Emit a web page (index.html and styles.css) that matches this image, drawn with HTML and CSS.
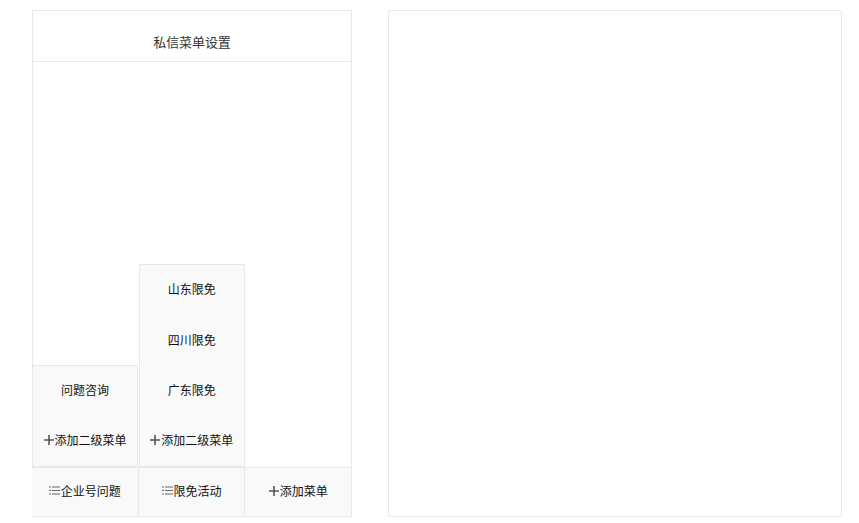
FILE: index.html
```html
<!DOCTYPE html>
<html lang="zh-CN">
<head>
  <meta charset="UTF-8">
  <title>私信菜单设置</title>
  <link rel="stylesheet" href="styles.css">
</head>
<body>
  <div class="phone">
    <div class="phone-title">私信菜单设置</div>
    <div class="menu-bar">
      <div class="menu-col">
        <div class="sub-menu">
          <div class="sub-item">问题咨询</div>
          <div class="sub-item"><svg class="icon-plus" viewBox="0 0 10 10"><path d="M0 5h10M5 0v10"/></svg>添加二级菜单</div>
        </div>
        <div class="menu-item"><svg class="icon-list" viewBox="0 0 11 9"><path d="M0 1h2M3 1h8M0 4.5h2M3 4.5h8M0 8h2M3 8h8"/></svg>企业号问题</div>
      </div>
      <div class="menu-col">
        <div class="sub-menu">
          <div class="sub-item">山东限免</div>
          <div class="sub-item">四川限免</div>
          <div class="sub-item">广东限免</div>
          <div class="sub-item"><svg class="icon-plus" viewBox="0 0 10 10"><path d="M0 5h10M5 0v10"/></svg>添加二级菜单</div>
        </div>
        <div class="menu-item"><svg class="icon-list" viewBox="0 0 11 9"><path d="M0 1h2M3 1h8M0 4.5h2M3 4.5h8M0 8h2M3 8h8"/></svg>限免活动</div>
      </div>
      <div class="menu-col">
        <div class="menu-item"><svg class="icon-plus" viewBox="0 0 10 10"><path d="M0 5h10M5 0v10"/></svg>添加菜单</div>
      </div>
    </div>
  </div>
  <div class="editor"></div>
</body>
</html>
```

FILE: styles.css
```css
body {
  margin: 0;
  padding: 10px 17px 6px 32px;
  height: 523px;
  box-sizing: border-box;
  display: flex;
  gap: 36px;
  background: #fff;
  color: #333;
  font-family: "Noto Sans CJK SC", "Liberation Sans", sans-serif;
  font-size: 12px;
  overflow: hidden;
}

.phone {
  width: 320px;
  box-sizing: border-box;
  border: 1px solid #e7e7e7;
  border-bottom: none;
  border-radius: 2px;
  display: flex;
  flex-direction: column;
}

.phone-title {
  height: 51px;
  box-sizing: border-box;
  padding-top: 22px;
  line-height: 18px;
  text-align: center;
  font-size: 13px;
  letter-spacing: -0.1px;
  border-bottom: 1px solid #e7e7e7;
}

.menu-bar {
  flex: 1;
  display: flex;
  align-items: flex-end;
  margin: 0 -1px;
}

.menu-col {
  flex: 1;
  display: flex;
  flex-direction: column;
  min-width: 0;
}

.sub-menu {
  margin-right: 0.5px;
  background: #f9f9f9;
  border: 1px solid #e7e7e7;
  border-radius: 2px 2px 0 0;
}

.sub-item {
  height: 50.2px;
  box-sizing: border-box;
  padding-bottom: 3px;
  display: flex;
  align-items: center;
  justify-content: center;
  color: #111;
}

.menu-item {
  height: 50px;
  box-sizing: border-box;
  padding-bottom: 3px;
  display: flex;
  align-items: center;
  justify-content: center;
  background: #f9f9f9;
  border: 1px solid #e7e7e7;
  border-left: none;
  border-top-color: #eaeaea;
  color: #111;
}

.icon-plus {
  width: 10px;
  height: 10px;
  margin: 1px 1px 0 0;
  fill: none;
  stroke: #555;
  stroke-width: 1.6;
}

.icon-list {
  width: 11px;
  height: 9px;
  margin-right: 1px;
  fill: none;
  stroke: #666;
  stroke-width: 1;
}

.editor {
  flex: 1;
  border: 1px solid #e7e7e7;
  border-radius: 2px;
}
```
